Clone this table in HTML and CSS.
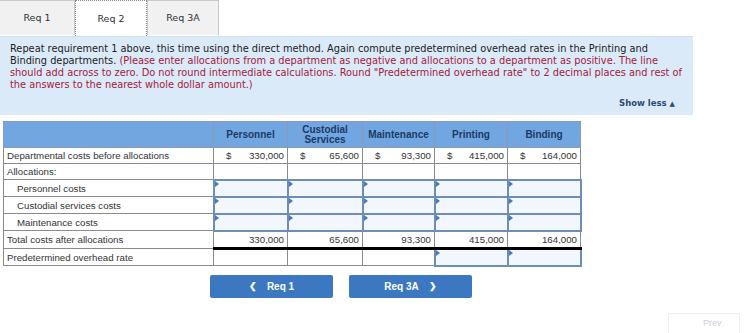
FILE: index.html
```html
<!DOCTYPE html>
<html>
<head>
<meta charset="utf-8">
<link rel="stylesheet" href="styles.css">
</head>
<body>
<div class="tabs">
  <div class="tab">Req 1</div>
  <div class="tab active">Req 2</div>
  <div class="tab">Req 3A</div>
</div>
<div class="instr">
  <p>Repeat requirement 1 above, this time using the direct method. Again compute predetermined overhead rates in the Printing and<br>Binding departments. <span class="red">(Please enter allocations from a department as negative and allocations to a department as positive. The line<br>should add across to zero. Do not round intermediate calculations. Round "Predetermined overhead rate" to 2 decimal places and rest of<br>the answers to the nearest whole dollar amount.)</span></p>
  <div class="showless">Show less <span class="tri">&#9650;</span></div>
</div>
<table class="grid">
  <colgroup>
    <col class="c0"><col class="c1"><col class="c2"><col class="c3"><col class="c4"><col class="c5">
  </colgroup>
  <thead>
    <tr class="hdr">
      <th></th>
      <th>Personnel</th>
      <th>Custodial<br>Services</th>
      <th>Maintenance</th>
      <th>Printing</th>
      <th>Binding</th>
    </tr>
  </thead>
  <tbody>
    <tr>
      <td class="lbl">Departmental costs before allocations</td>
      <td><div class="money"><span>$</span><span>330,000</span></div></td>
      <td><div class="money"><span>$</span><span>65,600</span></div></td>
      <td><div class="money"><span>$</span><span>93,300</span></div></td>
      <td><div class="money"><span>$</span><span>415,000</span></div></td>
      <td><div class="money"><span>$</span><span>164,000</span></div></td>
    </tr>
    <tr>
      <td class="lbl">Allocations:</td>
      <td></td><td></td><td></td><td></td><td></td>
    </tr>
    <tr class="irow">
      <td class="lbl ind">Personnel costs</td>
      <td class="inp"></td><td class="inp"></td><td class="inp"></td><td class="inp"></td><td class="inp"></td>
    </tr>
    <tr class="irow">
      <td class="lbl ind">Custodial services costs</td>
      <td class="inp"></td><td class="inp"></td><td class="inp"></td><td class="inp"></td><td class="inp"></td>
    </tr>
    <tr class="irow">
      <td class="lbl ind">Maintenance costs</td>
      <td class="inp"></td><td class="inp"></td><td class="inp"></td><td class="inp"></td><td class="inp"></td>
    </tr>
    <tr class="total">
      <td class="lbl">Total costs after allocations</td>
      <td class="num">330,000</td>
      <td class="num">65,600</td>
      <td class="num">93,300</td>
      <td class="num">415,000</td>
      <td class="num">164,000</td>
    </tr>
    <tr class="rate">
      <td class="lbl">Predetermined overhead rate</td>
      <td></td><td></td><td></td>
      <td class="inp"></td><td class="inp"></td>
    </tr>
  </tbody>
</table>
<div class="nav">
  <div class="btn"><span class="chev">&#10094;</span>Req 1</div>
  <div class="btn">Req 3A<span class="chev r">&#10095;</span></div>
</div>
<div class="prev">Prev</div>
</body>
</html>
```
FILE: styles.css
```css
html, body {
  margin: 0;
  padding: 0;
  background: #fff;
  width: 751px;
  height: 333px;
  overflow: hidden;
  position: relative;
}
body {
  font-family: "DejaVu Sans", Verdana, sans-serif;
}
.tabs {
  display: flex;
  height: 36px;
}
.tab {
  width: 72px;
  height: 35px;
  box-sizing: border-box;
  background: #f1f1f1;
  border: 1px solid #c9c9c9;
  border-bottom: none;
  font-size: 9.5px;
  color: #333;
  display: flex;
  align-items: center;
  justify-content: center;
  padding-bottom: 1px;
}
.tab:first-child {
  width: 75px;
  border-left: none;
}
.tab.active {
  background: #fff;
  border: 1px dotted #888;
  border-bottom: none;
  height: 36px;
}
.instr {
  width: 693px;
  height: 79px;
  box-sizing: border-box;
  background: #dbeaf8;
  border-top: 1px solid #cfe0f1;
  padding: 6px 0 0 10px;
  position: relative;
}
.instr p {
  margin: 0;
  white-space: nowrap;
  font-size: 9.8px;
  line-height: 12px;
  color: #222;
}
.red {
  color: #a3203b;
}
.showless {
  position: absolute;
  right: 18px;
  top: 61px;
  font-size: 8.5px;
  font-weight: bold;
  color: #2b4a6f;
}
.showless .tri {
  font-size: 7px;
}
.grid {
  border-collapse: collapse;
  margin: 6px 0 0 3px;
  font-family: "Liberation Sans", Arial, sans-serif;
  font-size: 9.7px;
  color: #333;
  table-layout: fixed;
}
.c0 { width: 210px; }
.c1 { width: 74px; }
.c2 { width: 75px; }
.c3 { width: 72px; }
.c4 { width: 73px; }
.c5 { width: 73px; }
.grid td, .grid th {
  border: 1px solid #8a8a8a;
  padding: 0 3px;
  height: 16px;
  box-sizing: border-box;
}
.hdr th {
  background: #72a6e0;
  color: #1b3a66;
  font-weight: bold;
  font-size: 10px;
  height: 26px;
  line-height: 10px;
  text-align: center;
  border-color: #8a9bb0;
}
.lbl {
  padding-left: 3px;
  white-space: nowrap;
}
.lbl.ind {
  padding-left: 13px;
}
.money {
  display: flex;
  justify-content: space-between;
  padding-left: 9px;
}
.num {
  text-align: right;
}
.grid .irow td {
  height: 17px;
}
.grid td.inp {
  border: 2px solid #6d8db5;
  background: #f1f7fd;
  position: relative;
}
.grid td.inp::before {
  content: "";
  position: absolute;
  left: 0;
  top: 0;
  border-top: 3px solid transparent;
  border-bottom: 3px solid transparent;
  border-left: 4px solid #4a79b6;
}
.total td {
  height: 18px;
}
.total td:not(.lbl) {
  border-top: 1px solid #000;
  border-bottom: 3px solid #000;
}
.rate td {
  height: 17px;
}
.nav {
  display: flex;
  gap: 16px;
  margin: 8px 0 0 210px;
}
.btn {
  width: 123px;
  height: 23px;
  background: #3b78c1;
  border-radius: 2px;
  color: #fff;
  font-family: "Liberation Sans", Arial, sans-serif;
  font-weight: bold;
  font-size: 10px;
  display: flex;
  align-items: center;
  justify-content: center;
}
.chev {
  font-size: 9px;
  margin-right: 10px;
}
.chev.r {
  margin-right: 0;
  margin-left: 10px;
}
.prev {
  position: absolute;
  left: 668px;
  top: 313px;
  width: 72px;
  height: 30px;
  border: 1px solid #eee;
  border-radius: 2px;
  color: #ccd;
  font-family: "Liberation Sans", Arial, sans-serif;
  font-size: 9px;
  padding: 4px 0 0 34px;
  box-sizing: border-box;
}
```
